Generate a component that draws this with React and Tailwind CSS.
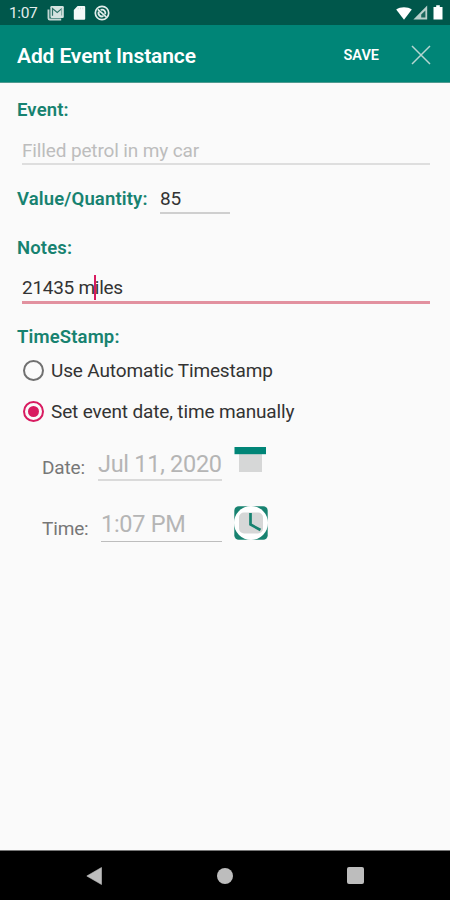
import clsx from "clsx";

function StatusBar() {
  return (
    <div className="flex h-[25px] items-center bg-[#00574b] pl-[9px] pr-[7px] text-white">
      <span className="w-[28px] pt-[2px] text-[15.5px] leading-[23px] tracking-[-0.4px] text-[#e3edeb]">1:07</span>

      {/* Notification icons */}
      <svg className="ml-[10px] h-4 w-[18px]" viewBox="0 0 18 16" fill="none">
        <path d="M1.500 4.500v8.700q0 1.300 1.300 1.300h11.400" stroke="#c3d6d3" strokeWidth="1.900" />
        <rect x="3.400" y="1.100" width="13.400" height="11.800" rx="1.200" fill="#d5e3e0" />
        <path d="M5.500 10.800V3.600l4.700 3.800 4.600-3.800" stroke="#2e7268" strokeWidth="1.200" />
        <path d="M14.600 4v6.500" stroke="#7fa8a1" strokeWidth="1" />
      </svg>
      <svg className="ml-[8px] h-4 w-[13px]" viewBox="0 0 13 16">
        <path d="M4.600 1h6.600q1 0 1 1v11.800q0 1-1 1H1.800q-1 0-1-1V5z" fill="#f5f9f8" />
        <path d="M5.200 2.600v1.700M7.500 2.600v1.700M9.800 2.600v1.700" stroke="#c9dcd9" strokeWidth="0.8" />
      </svg>
      <svg className="ml-[8px] h-4 w-4" viewBox="0 0 16 16" fill="none" stroke="#e3edeb">
        <circle cx="8" cy="8" r="6.700" strokeWidth="1.700" />
        <path d="M4.900 6.600a3.300 3.300 0 0 0 4.500 4.400M6.700 4.900a3.400 3.400 0 0 1 4.500 4.300" strokeWidth="1.900" />
        <path d="M3.800 4.300l8.600 7.900" strokeWidth="1.700" />
      </svg>

      {/* Wifi, signal, battery */}
      <svg className="ml-auto h-[14px] w-[16px]" viewBox="0 0 16 14">
        <path d="M8 13.800L.2 3.600C4.400.4 11.600.4 15.800 3.600z" fill="#fff" />
      </svg>
      <svg className="ml-[1px] h-[15px] w-[15px]" viewBox="0 0 15 15">
        <path d="M14.200.6v13.800H.4z" fill="#b8cfcb" />
        <path d="M12.400 5.500v7H8.200V9.400z" fill="#1c685d" />
      </svg>
      <svg className="ml-[5px] h-[15px] w-[10px]" viewBox="0 0 10 15">
        <path d="M3.200.3h3.600v1.600h2.700v12.500H.5V1.900h2.700z" fill="#fff" />
      </svg>
    </div>
  );
}

function Header() {
  return (
    <header className="flex h-[58px] items-center border-b border-[#4f9a90] bg-[#008577] pl-[17px] pr-[19px] pt-[3px] text-white">
      <h1 className="pt-[2px] text-[21px] font-semibold leading-6 tracking-[-0.12px]">Add Event Instance</h1>
      <button className="ml-auto pt-[2px] text-[14.5px] font-semibold leading-5">SAVE</button>
      <button className="ml-[32px]" aria-label="Close">
        <svg className="h-5 w-5" viewBox="0 0 20 20" stroke="#b5d6d1" strokeWidth="1.500">
          <path d="M1 1l18 18M19 1L1 19" />
        </svg>
      </button>
    </header>
  );
}

function Label({ children }) {
  return (
    <span className="text-[18.5px] font-semibold leading-6 tracking-[0.14px] text-[#178270]">{children}</span>
  );
}

function Radio({ label, checked }) {
  return (
    <div className="flex h-6 items-center">
      <span
        className={clsx(
          "grid h-[21px] w-[21px] place-items-center rounded-full border-2",
          checked ? "border-[#d81b60]" : "border-[#707070]"
        )}
      >
        {checked && <span className="h-[11px] w-[11px] rounded-full bg-[#d81b60]" />}
      </span>
      <span className="ml-[7px] pt-px text-[19px] leading-6 tracking-[-0.14px] text-[#333]">{label}</span>
    </div>
  );
}

function NavBar() {
  return (
    <nav className="flex h-[50px] items-center border-t border-[#777] bg-black pl-[86px] pr-[86px]">
      <svg className="h-[18px] w-[17px]" viewBox="0 0 17 18" fill="#bdbdbd">
        <path d="M.8 9L15.500.500v17z" stroke="#bdbdbd" strokeWidth=".6" strokeLinejoin="round" />
      </svg>
      <span className="ml-[114px] h-4 w-4 rounded-full bg-[#bdbdbd]" />
      <span className="ml-auto h-[17px] w-[17px] rounded-[2px] bg-[#bdbdbd]" />
    </nav>
  );
}

export default function App() {
  return (
    <div className="flex h-[900px] w-[450px] flex-col overflow-hidden bg-[#fafafa] font-[Roboto,sans-serif]">
      <StatusBar />
      <Header />

      <main className="flex flex-1 flex-col pl-[17px] pr-5 pt-[15px]">
        <Label>Event:</Label>
        <div className="ml-[5px] mt-4 h-[27px] border-b-2 border-[#dedede] text-[19px] leading-[25px] tracking-[-0.14px] text-[#bdbdbd]">
          Filled petrol in my car
        </div>

        <div className="mt-[22px] flex h-[27px]">
          <div className="w-[143px]">
            <Label>Value/Quantity:</Label>
          </div>
          <div className="h-[27px] w-[70px] border-b-2 border-[#cfcfcf] text-[19px] leading-6 tracking-[-0.2px] text-[#333]">
            85
          </div>
        </div>

        <div className="mt-[22px] h-6">
          <Label>Notes:</Label>
        </div>
        <div className="relative ml-[5px] mt-4 h-[28px] border-b-[3px] border-[#e2919f] text-[19px] leading-6 tracking-[-0.28px] text-[#333]">
          21435 miles
          <span className="absolute left-[72px] top-[-1px] h-[25px] w-[2px] bg-[#d81b60]" />
        </div>

        <div className="mt-[21px] h-6">
          <Label>TimeStamp:</Label>
        </div>
        <div className="ml-[6px] mt-[9px] flex flex-col gap-[17px]">
          <Radio label="Use Automatic Timestamp" />
          <Radio label="Set event date, time manually" checked />
        </div>

        {/* Date */}
        <div className="ml-[25px] mt-[24px] flex h-[35px]">
          <span className="w-[56px] pt-[9px] text-[19px] leading-6 tracking-[-0.16px] text-[#777]">Date:</span>
          <div className="h-[34px] w-[124px] whitespace-nowrap border-b-2 border-[#dadada] text-[23.5px] leading-[34px] tracking-[-0.28px] text-[#b5b5b5]">
            Jul 11, 2020
          </div>
          <svg className="ml-[12px] h-[26px] w-[33px]" viewBox="0 0 33 26">
            <path d="M5 7h23v18H5z" fill="#d6d7d7" />
            <path d="M.5 0H32v7.200H.5z" fill="#008577" />
          </svg>
        </div>

        {/* Time */}
        <div className="ml-[25px] mt-[25px] flex h-[35px]">
          <span className="w-[59px] pt-[10px] text-[19px] leading-6 tracking-[-0.16px] text-[#777]">Time:</span>
          <div className="h-[35px] w-[121px] border-b border-[#bdbdbd] text-[23.5px] leading-[35px] tracking-[-0.28px] text-[#b5b5b5]">
            1:07 PM
          </div>
          <svg className="-mt-px ml-[12px] h-[34px] w-[34px]" viewBox="0 0 34 34">
            <rect x=".3" y=".3" width="33.400" height="33.400" rx="4.500" fill="#178270" />
            <circle cx="17" cy="17" r="17" fill="#fff" />
            <rect x="5" y="6.500" width="24" height="21" rx="5" fill="#d6d7d7" />
            <path d="M16.500 7v11.500l10 5.500" fill="none" stroke="#178270" strokeWidth="2.700" />
          </svg>
        </div>
      </main>

      <NavBar />
    </div>
  );
}
